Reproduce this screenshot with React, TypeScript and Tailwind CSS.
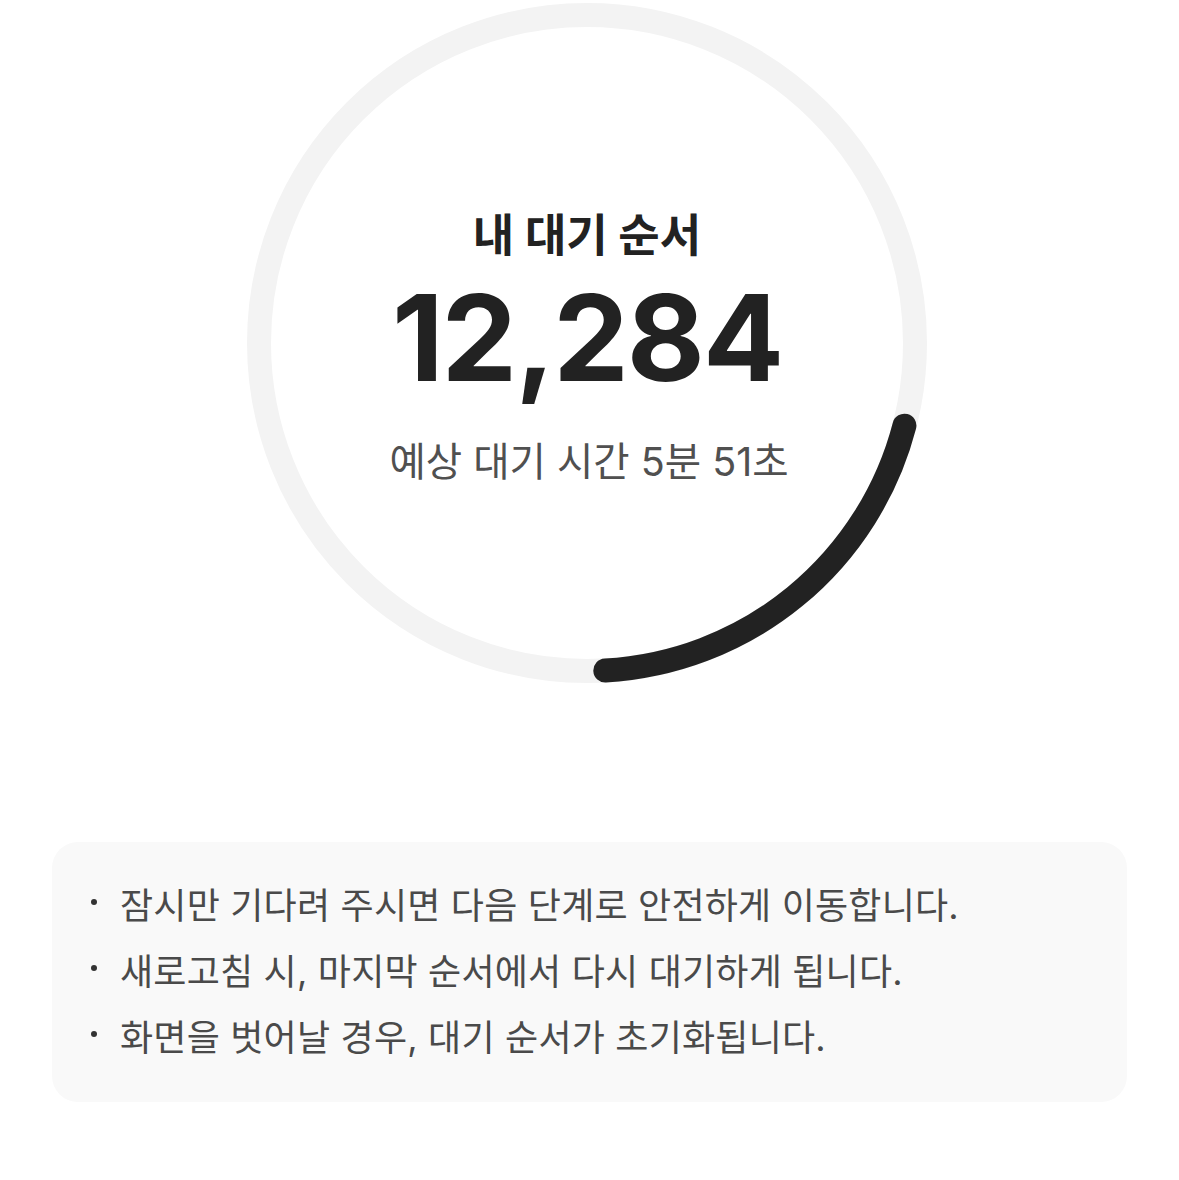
import React from 'react';

const notes = [
  '잠시만 기다려 주시면 다음 단계로 안전하게 이동합니다.',
  '새로고침 시, 마지막 순서에서 다시 대기하게 됩니다.',
  '화면을 벗어날 경우, 대기 순서가 초기화됩니다.',
];

const SIZE = 680;
const STROKE = 24;
const R = (SIZE - STROKE) / 2;
const C = SIZE / 2;

// angle in degrees, clockwise from 12 o'clock
const point = (deg: number) => {
  const rad = (deg * Math.PI) / 180;
  return { x: C + R * Math.sin(rad), y: C - R * Math.cos(rad) };
};

const ProgressRing = ({ from, to }: { from: number; to: number }) => {
  const a = point(from);
  const b = point(to);
  const large = to - from > 180 ? 1 : 0;
  return (
    <svg width={SIZE} height={SIZE} viewBox={`0 0 ${SIZE} ${SIZE}`} className="block">
      <circle cx={C} cy={C} r={R} fill="none" stroke="#f3f3f3" strokeWidth={STROKE} />
      <path
        d={`M ${a.x} ${a.y} A ${R} ${R} 0 ${large} 1 ${b.x} ${b.y}`}
        fill="none"
        stroke="#222222"
        strokeWidth={STROKE}
        strokeLinecap="round"
      />
    </svg>
  );
};

export default function App() {
  return (
    <div
      className="min-h-[1180px] w-full bg-white px-[52px] pt-[3px]"
      style={{ fontFamily: 'Inter, "Noto Sans CJK KR", sans-serif' }}
    >
      {/* 대기 순서 링 */}
      <div className="flex justify-center pr-[5px]">
        <div className="relative">
          <ProgressRing from={104.6} to={176.8} />
          <div className="absolute inset-0 flex flex-col items-center pt-[205px]">
            <h2 className="text-[45px] font-bold leading-[56px] text-[#222]">내 대기 순서</h2>
            <p className="mt-[14px] text-[120px] font-bold leading-[120px] tracking-[-2px] text-[#222]">12,284</p>
            <p className="mt-[40px] pl-[4px] text-[39.5px] leading-[48px] text-[#505050]">예상 대기 시간 5분 51초</p>
          </div>
        </div>
      </div>

      {/* 안내 문구 */}
      <div className="mt-[159px] rounded-[26px] bg-[#f9f9f9] px-[39px] pt-[40px] pb-[40px]">
        <ul className="flex flex-col gap-[18px]">
          {notes.map((n) => (
            <li key={n} className="flex items-center gap-[23px]">
              <span className="mb-[8px] h-[6px] w-[6px] shrink-0 rounded-full bg-[#333]" />
              <span className="text-[36px] leading-[48px] tracking-[0.2px] text-[#4a4a4a]">{n}</span>
            </li>
          ))}
        </ul>
      </div>
    </div>
  );
}
